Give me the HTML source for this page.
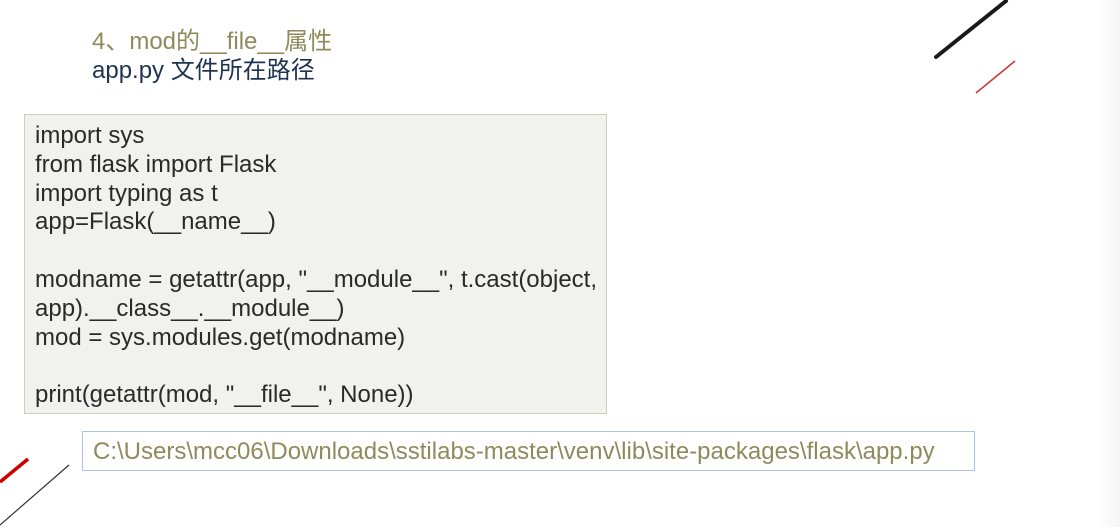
<!DOCTYPE html>
<html><head><meta charset="utf-8"><style>
html,body{margin:0;padding:0;}
body{width:1120px;height:527px;background:#fff;position:relative;overflow:hidden;font-family:"Liberation Sans","Noto Sans CJK SC",sans-serif;}
.t1{position:absolute;left:92px;top:28px;font-size:24px;color:#8f8a5c;line-height:28px;}
.t2{position:absolute;left:92px;top:57px;font-size:24px;color:#1f3350;line-height:28px;}
.code{position:absolute;left:24px;top:114px;width:581px;height:298px;background:#f1f1f0;border:1px solid #cfcfb4;}
.code pre{margin:0;position:absolute;left:10px;top:7px;font-family:"Liberation Sans",sans-serif;font-size:24px;line-height:28.8px;color:#2a2a2a;}
.path{position:absolute;left:82px;top:431px;width:891px;height:38px;border:1px solid #a7c3e6;background:#fff;}
.path span{position:absolute;left:10px;top:6px;font-size:24px;color:#8f8a5c;line-height:28px;}
.edge{position:absolute;right:0;top:0;width:22px;height:527px;background:linear-gradient(to right,#fff,#f5f5f5);}
</style></head><body>
<div class="edge"></div>
<div class="t1">4、mod的__file__属性</div>
<div class="t2">app.py 文件所在路径</div>
<div class="code"><pre>import sys
from flask import Flask
import typing as t
app=Flask(__name__)

modname = getattr(app, "__module__", t.cast(object,
app).__class__.__module__)
mod = sys.modules.get(modname)

print(getattr(mod, "__file__", None))</pre></div>
<div class="path"><span>C:\Users\mcc06\Downloads\sstilabs-master\venv\lib\site-packages\flask\app.py</span></div>
<svg width="1120" height="527" style="position:absolute;left:0;top:0">
<line x1="936" y1="57" x2="1006" y2="1" stroke="#1a1a1a" stroke-width="4" stroke-linecap="round"/>
<line x1="976" y1="93" x2="1015" y2="61" stroke="#c8363a" stroke-width="1.5"/>
<line x1="0" y1="482" x2="28" y2="459" stroke="#c00" stroke-width="3.5"/>
<line x1="0" y1="525" x2="69" y2="465" stroke="#333" stroke-width="1.2"/>
</svg>
</body></html>
